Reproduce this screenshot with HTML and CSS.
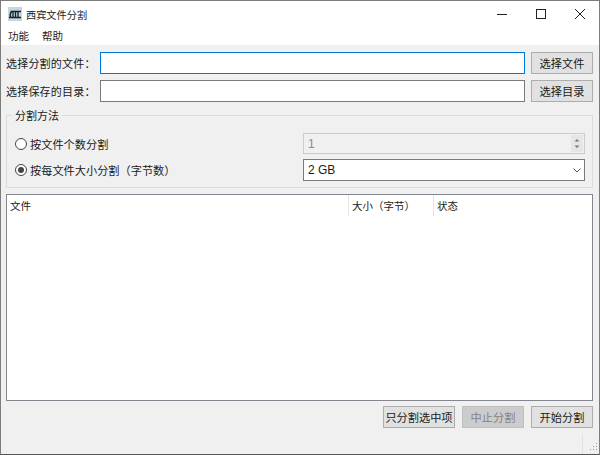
FILE: index.html
```html
<!DOCTYPE html>
<html lang="zh">
<head>
<meta charset="utf-8">
<title>西宾文件分割</title>
<link rel="stylesheet" href="styles.css">
</head>
<body>
<div class="window">
  <header class="titlebar">
    <svg class="app-icon" width="14" height="14" viewBox="0 0 14 14">
      <rect width="14" height="14" fill="#c5d6df"/>
      <path d="M2.500 4.500h10.500M1 10.500h12M5 4.500v6M7.500 4.500v6M10 4.500v6M3.500 4.500Q1.500 7 2.500 10.500" stroke="#10202c" stroke-width="1.300" fill="none"/>
    </svg>
    <span class="title">西宾文件分割</span>
    <div class="controls">
      <svg width="39" height="26" viewBox="0 0 39 26"><path d="M15 13.500h10" stroke="#222" fill="none"/></svg>
      <svg width="39" height="26" viewBox="0 0 39 26"><rect x="15.500" y="8.500" width="9" height="9" stroke="#222" fill="none"/></svg>
      <svg width="39" height="26" viewBox="0 0 39 26"><path d="M15 8l10 10M25 8l-10 10" stroke="#222" fill="none"/></svg>
    </div>
  </header>
  <nav class="menubar"><span>功能</span><span>帮助</span></nav>
  <main class="content">
    <div class="row">
      <label class="row-label">选择分割的文件：</label>
      <div class="field focused"></div>
      <button class="btn">选择文件</button>
    </div>
    <div class="row">
      <label class="row-label">选择保存的目录：</label>
      <div class="field"></div>
      <button class="btn">选择目录</button>
    </div>
    <fieldset class="group">
      <legend>分割方法</legend>
      <div class="option">
        <span class="radio"></span><span class="option-text">按文件个数分割</span>
        <div class="spin"><span>1</span>
          <svg class="spin-arrows" width="12" height="17" viewBox="0 0 12 17"><path d="M3.500 6.500L6 4l2.500 2.500zM3.500 10.500L6 13l2.500-2.500z" fill="#777"/></svg>
        </div>
      </div>
      <div class="option">
        <span class="radio checked"></span><span class="option-text">按每文件大小分割（字节数）</span>
        <div class="combo"><span>2 GB</span>
          <svg width="8" height="5" viewBox="0 0 8 5"><path d="M.5.500L4 4 7.500.500" stroke="#555" fill="none"/></svg>
        </div>
      </div>
    </fieldset>
    <section class="table">
      <div class="thead">
        <span class="col-file">文件</span>
        <span class="col-size">大小（字节）</span>
        <span class="col-state">状态</span>
      </div>
    </section>
    <div class="actions">
      <button class="btn selected-only">只分割选中项</button>
      <button class="btn disabled">中止分割</button>
      <button class="btn">开始分割</button>
    </div>
  </main>
  <svg class="grip" width="17" height="20" viewBox="0 0 17 20"><path d="M.5 0v20" stroke="#e2e2e2" fill="none"/><path d="M14 9h1v1h-1zM11 12h1v1h-1zM14 12h1v1h-1zM8 15h1v1H8zM11 15h1v1h-1zM14 15h1v1h-1z" fill="#a0a0a0"/></svg>
</div>
</body>
</html>
```

FILE: styles.css
```css
* { box-sizing: border-box; }
html, body { margin: 0; height: 100%; }
body {
  font-family: "Noto Sans CJK SC", "Liberation Sans", sans-serif;
  font-size: 11px;
  color: #1a1a1a;
  background: #f0f0f0;
}
.window {
  position: relative;
  width: 600px;
  height: 455px;
  display: flex;
  flex-direction: column;
  border: 1px solid #7d7d7d;
  border-bottom-color: #555;
  overflow: hidden;
}
.titlebar {
  height: 26px;
  flex: none;
  background: #fff;
  display: flex;
  align-items: center;
  padding-left: 7px;
  font-size: 10.2px;
}
.app-icon { flex: none; }
.title { margin-left: 4px; }
.controls { margin-left: auto; display: flex; }
.controls svg { display: block; }
.menubar {
  height: 18px;
  flex: none;
  background: #fff;
  display: flex;
  align-items: center;
  gap: 13px;
  padding: 0 0 2px 7px;
  font-size: 10.5px;
}
.content {
  flex: 1;
  display: flex;
  flex-direction: column;
  padding: 7px 6px 0 5px;
}
.row {
  display: flex;
  align-items: stretch;
  height: 22px;
  margin-bottom: 6px;
}
.row-label {
  width: 94px;
  flex: none;
  line-height: 22px;
  white-space: nowrap;
  letter-spacing: .2px;
}
.field {
  width: 425px;
  flex: none;
  background: #fff;
  border: 1px solid #7a7a7a;
}
.field.focused { border-color: #0078d7; }
.btn {
  font: inherit;
  font-size: 11.2px;
  color: inherit;
  height: 22px;
  width: 62px;
  padding: 0;
  background: #e1e1e1;
  border: 1px solid #adadad;
  white-space: nowrap;
}
.row .btn { margin-left: 6px; }
.group {
  margin: 0;
  padding: 0;
  height: 80px;
  border: 1px solid #dcdcdc;
  min-width: 0;
}
.group legend { margin-left: 5px; padding: 0 3px; line-height: 14px; }
.option {
  height: 21px;
  margin-bottom: 5px;
  display: flex;
  align-items: center;
  padding-left: 8px;
}
.group .option:first-of-type { margin-top: 11px; }
.group .option:last-of-type { height: 22px; }
.radio {
  width: 12px;
  height: 12px;
  flex: none;
  border: 1px solid #444;
  border-radius: 50%;
  background: #fff;
  display: grid;
  place-items: center;
}
.radio.checked::after {
  content: "";
  width: 6px;
  height: 6px;
  border-radius: 50%;
  background: #444;
}
.option-text { margin-left: 3px; width: 273px; flex: none; white-space: nowrap; font-size: 11.2px; }
.spin, .combo {
  width: 282px;
  display: flex;
  align-items: center;
  justify-content: space-between;
  padding-left: 4px;
  font-family: "Liberation Sans", sans-serif;
  font-size: 12px;
}
.spin {
  height: 21px;
  background: #f0f0f0;
  border: 1px solid #cccccc;
  color: #8c8c8c;
  padding-right: 1px;
}
.spin-arrows { background: #e6e6e6; }
.combo {
  height: 22px;
  background: #fff;
  border: 1px solid #7a7a7a;
  padding-right: 3px;
}
.table {
  margin-top: 6px;
  height: 207px;
  flex: none;
  background: #fff;
  border: 1px solid #828790;
}
.thead { display: flex; height: 21px; align-items: stretch; line-height: 21px; font-size: 10.5px; }
.thead span { padding-left: 3px; border-right: 1px solid #e5e5e5; white-space: nowrap; }
.col-file { width: 342px; }
.col-size { width: 85px; }
.col-state { border-right: 0 !important; }
.actions {
  margin-top: 5px;
  display: flex;
  justify-content: flex-end;
  gap: 7px;
}
.selected-only { width: 72px; }
.disabled { background: #cccccc; border-color: #bfbfbf; color: #838383; }
.grip { position: absolute; right: 0; bottom: 0; }
```
